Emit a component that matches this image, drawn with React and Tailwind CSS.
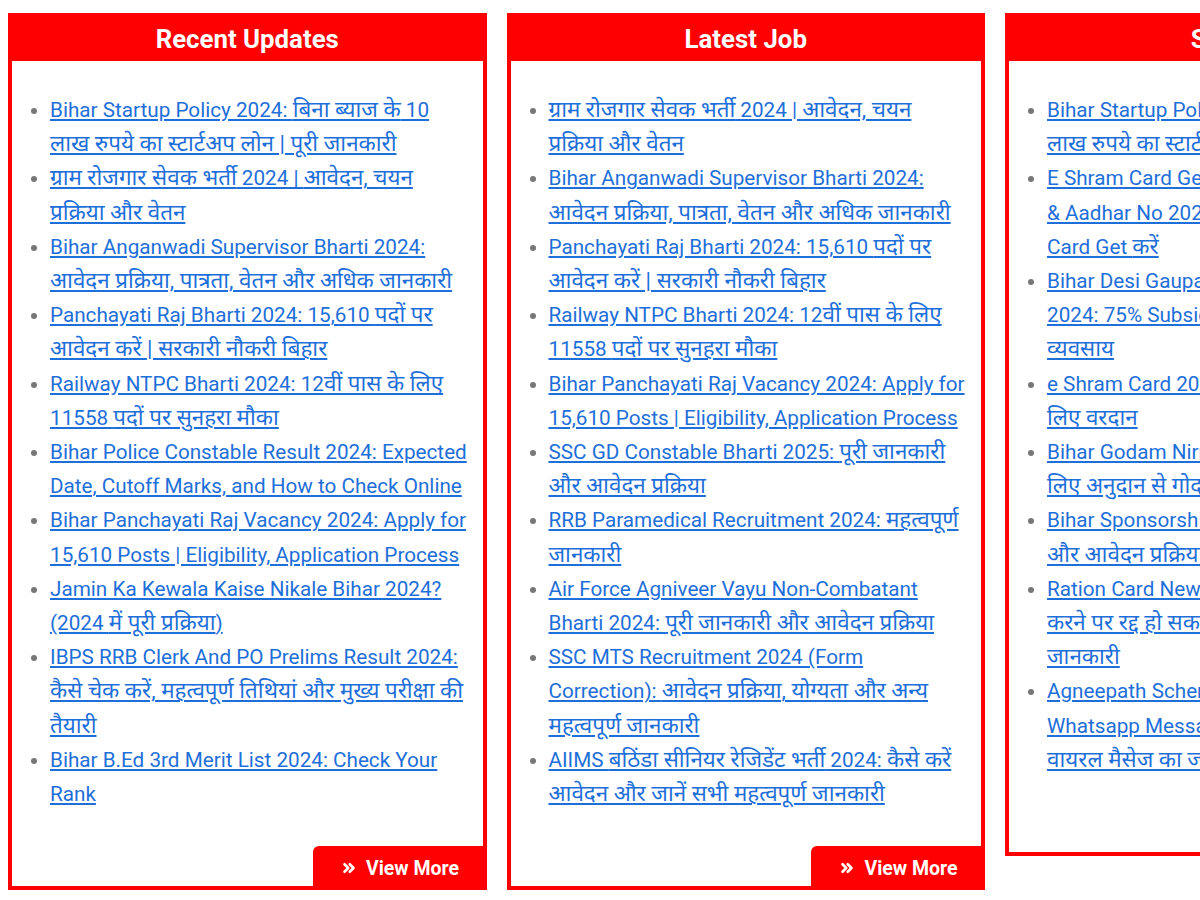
import { ChevronsRight } from 'lucide-react'

const recentUpdates = [
  'Bihar Startup Policy 2024: बिना ब्याज के 10 लाख रुपये का स्टार्टअप लोन | पूरी जानकारी',
  'ग्राम रोजगार सेवक भर्ती 2024 | आवेदन, चयन प्रक्रिया और वेतन',
  'Bihar Anganwadi Supervisor Bharti 2024: आवेदन प्रक्रिया, पात्रता, वेतन और अधिक जानकारी',
  'Panchayati Raj Bharti 2024: 15,610 पदों पर आवेदन करें | सरकारी नौकरी बिहार',
  'Railway NTPC Bharti 2024: 12वीं पास के लिए 11558 पदों पर सुनहरा मौका',
  'Bihar Police Constable Result 2024: Expected Date, Cutoff Marks, and How to Check Online',
  'Bihar Panchayati Raj Vacancy 2024: Apply for 15,610 Posts | Eligibility, Application Process',
  'Jamin Ka Kewala Kaise Nikale Bihar 2024? (2024 में पूरी प्रक्रिया)',
  'IBPS RRB Clerk And PO Prelims Result 2024: कैसे चेक करें, महत्वपूर्ण तिथियां और मुख्य परीक्षा की तैयारी',
  'Bihar B.Ed 3rd Merit List 2024: Check Your Rank',
]

const latestJobs = [
  'ग्राम रोजगार सेवक भर्ती 2024 | आवेदन, चयन प्रक्रिया और वेतन',
  'Bihar Anganwadi Supervisor Bharti 2024: आवेदन प्रक्रिया, पात्रता, वेतन और अधिक जानकारी',
  'Panchayati Raj Bharti 2024: 15,610 पदों पर आवेदन करें | सरकारी नौकरी बिहार',
  'Railway NTPC Bharti 2024: 12वीं पास के लिए 11558 पदों पर सुनहरा मौका',
  'Bihar Panchayati Raj Vacancy 2024: Apply for 15,610 Posts | Eligibility, Application Process',
  'SSC GD Constable Bharti 2025: पूरी जानकारी और आवेदन प्रक्रिया',
  'RRB Paramedical Recruitment 2024: महत्वपूर्ण जानकारी',
  'Air Force Agniveer Vayu Non-Combatant Bharti 2024: पूरी जानकारी और आवेदन प्रक्रिया',
  'SSC MTS Recruitment 2024 (Form Correction): आवेदन प्रक्रिया, योग्यता और अन्य महत्वपूर्ण जानकारी',
  'AIIMS बठिंडा सीनियर रेजिडेंट भर्ती 2024: कैसे करें आवेदन और जानें सभी महत्वपूर्ण जानकारी',
]

const schemes = [
  'Bihar Startup Policy 2024: बिना ब्याज के 10 लाख रुपये का स्टार्टअप लोन | पूरी जानकारी',
  'E Shram Card Get Kaise Kare Mobile Number &\u00a0Aadhar No 2024: घर बैठे आसानी से ई-श्रम Card\u00a0Get\u00a0करें',
  'Bihar Desi Gaupalan Protsahan Yojana Online 2024: 75% Subsidy पर शुरू करें अपना डेयरी व्यवसाय',
  'e Shram Card 2024: असंगठित क्षेत्र के श्रमिकों के लिए वरदान',
  'Bihar Godam Nirman Yojana 2024: किसानों के लिए अनुदान से गोदाम निर्माण',
  'Bihar Sponsorship Yojana 2024: पात्रता, लाभ और आवेदन प्रक्रिया',
  'Ration Card New Rules 2024: ये बड़ी गलती करने\u00a0पर रद्द हो सकता है राशन कार्ड, जानें पूरी जानकारी',
  'Agneepath Scheme Fact Check 2024: Whatsapp Message पर तेजी से फैल रहे झूठे वायरल मैसेज का जानें सच',
]

// Devanagari runs render a touch larger than the Latin text
function PostTitle({ text }) {
  const parts = text.split(/([\u0900-\u097F]+(?:[\s\u00a0,|.]+[\u0900-\u097F]+)*)/)
  return parts.map((part, i) =>
    /[\u0900-\u097F]/.test(part) ? (
      <span key={i} className="text-[22.4px] leading-none">
        {part}
      </span>
    ) : (
      part
    )
  )
}

function PostBox({ title, posts }) {
  return (
    <div className="relative border-4 border-[#ff0000] bg-white">
      <div className="flex h-[44px] items-center justify-center bg-[#ff0000] text-[25.8px] font-bold text-white">
        {title}
      </div>
      <ul className="list-disc pb-[75px] pl-[38px] pr-3 pt-8 text-[20.7px] leading-[34.2px] text-[#777]">
        {posts.map((post, i) => (
          <li key={i}>
            <a href="#" className="text-[#1e6fd9] underline decoration-[#1e6fd9]">
              <PostTitle text={post} />
            </a>
          </li>
        ))}
      </ul>
      <a
        href="#"
        className="absolute bottom-[-4px] right-[-4px] flex h-[44px] w-[174px] items-center justify-center gap-2 rounded-tl-md bg-[#ff0000] text-[19.5px] font-bold text-white"
      >
        <ChevronsRight size={18} strokeWidth={3.5} />
        View More
      </a>
    </div>
  )
}

export default function App() {
  return (
    <div
      className="w-full overflow-hidden bg-white pl-2 pt-[13px]"
      style={{ fontFamily: 'Roboto, "Noto Sans Devanagari", "Noto Sans", sans-serif' }}
    >
      <div className="grid w-[1475px] grid-cols-[repeat(3,478.5px)] items-start gap-x-5">
        <PostBox title="Recent Updates" posts={recentUpdates} />
        <PostBox title="Latest Job" posts={latestJobs} />
        <PostBox title="Schemes" posts={schemes} />
      </div>
    </div>
  )
}
